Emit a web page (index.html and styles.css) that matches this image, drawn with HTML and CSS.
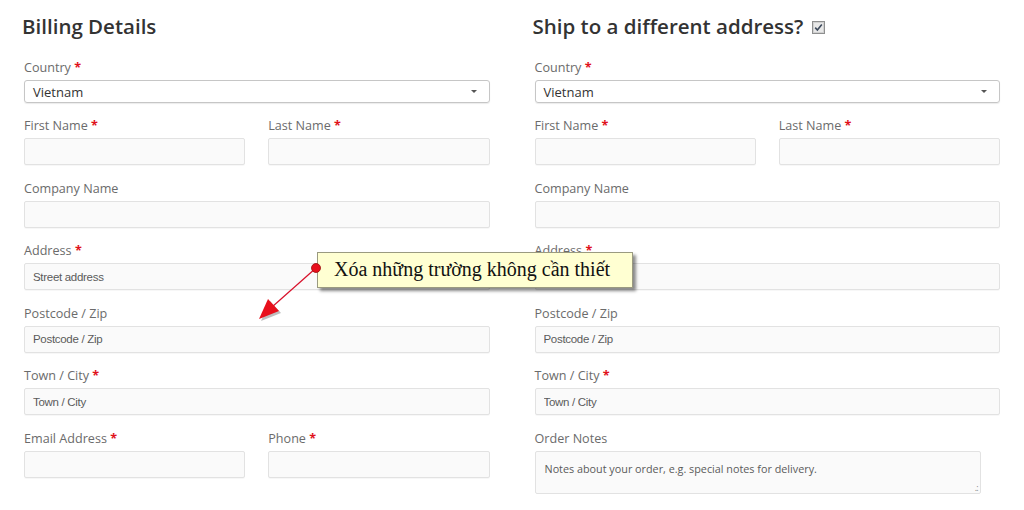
FILE: index.html
```html
<!DOCTYPE html>
<html lang="vi">
<head>
    <meta charset="UTF-8">
    <meta name="viewport" content="width=device-width, initial-scale=1.0">
    <title>Checkout</title>
    <link rel="stylesheet" href="styles.css">
</head>
<body>
    <div class="checkout">
        <div class="column">
            <h3 class="title">Billing Details</h3>

            <div class="field field-select">
                <label class="label">Country <abbr class="req">*</abbr></label>
                <div class="select"><span>Vietnam</span><i class="caret"></i></div>
            </div>

            <div class="pair">
                <div class="field">
                    <label class="label">First Name <abbr class="req">*</abbr></label>
                    <input type="text" class="input-field">
                </div>
                <div class="field">
                    <label class="label">Last Name <abbr class="req">*</abbr></label>
                    <input type="text" class="input-field">
                </div>
            </div>

            <div class="field">
                <label class="label">Company Name</label>
                <input type="text" class="input-field">
            </div>

            <div class="field">
                <label class="label">Address <abbr class="req">*</abbr></label>
                <input type="text" class="input-field" placeholder="Street address">
            </div>

            <div class="field">
                <label class="label">Postcode / Zip</label>
                <input type="text" class="input-field" placeholder="Postcode / Zip">
            </div>

            <div class="field">
                <label class="label">Town / City <abbr class="req">*</abbr></label>
                <input type="text" class="input-field" placeholder="Town / City">
            </div>

            <div class="pair">
                <div class="field">
                    <label class="label">Email Address <abbr class="req">*</abbr></label>
                    <input type="text" class="input-field">
                </div>
                <div class="field">
                    <label class="label">Phone <abbr class="req">*</abbr></label>
                    <input type="text" class="input-field">
                </div>
            </div>
        </div>

        <div class="column">
            <h3 class="title">Ship to a different address?
                <svg class="checkbox" width="13" height="13" viewBox="0 0 13 13">
                    <rect x="0.5" y="0.5" width="12" height="12" fill="#f4f4f4" stroke="#8e8f8f"/>
                    <rect x="1.5" y="1.5" width="10" height="10" fill="#e8e8e8" stroke="#d0d0d0"/>
                    <path d="M3.2 6.6 L5.4 9 L9.8 3.6" fill="none" stroke="#3d4a5c" stroke-width="1.6"/>
                </svg>
            </h3>

            <div class="field field-select">
                <label class="label">Country <abbr class="req">*</abbr></label>
                <div class="select"><span>Vietnam</span><i class="caret"></i></div>
            </div>

            <div class="pair">
                <div class="field">
                    <label class="label">First Name <abbr class="req">*</abbr></label>
                    <input type="text" class="input-field">
                </div>
                <div class="field">
                    <label class="label">Last Name <abbr class="req">*</abbr></label>
                    <input type="text" class="input-field">
                </div>
            </div>

            <div class="field">
                <label class="label">Company Name</label>
                <input type="text" class="input-field">
            </div>

            <div class="field">
                <label class="label">Address <abbr class="req">*</abbr></label>
                <input type="text" class="input-field">
            </div>

            <div class="field">
                <label class="label">Postcode / Zip</label>
                <input type="text" class="input-field" placeholder="Postcode / Zip">
            </div>

            <div class="field">
                <label class="label">Town / City <abbr class="req">*</abbr></label>
                <input type="text" class="input-field" placeholder="Town / City">
            </div>

            <div class="field">
                <label class="label">Order Notes</label>
                <div class="notes-wrap">
                    <textarea class="notes" placeholder="Notes about your order, e.g. special notes for delivery."></textarea>
                    <span class="grip">.:</span>
                </div>
            </div>
        </div>
    </div>

    <!-- annotation drawn over the form -->
    <svg class="pointer" width="80" height="70" viewBox="250 258 80 70">
        <line x1="316" y1="268" x2="272" y2="307" stroke="#d8102a" stroke-width="1.2"/>
        <polygon points="261,321 270,301 281,313" fill="#6e6e6e" opacity="0.45"/>
        <polygon points="259,319 268,299 279,311" fill="#e8101c"/>
        <circle cx="316" cy="268" r="4.5" fill="#e8101c" stroke="#9a0c0c" stroke-width="0.8"/>
    </svg>
    <div class="callout">Xóa những trường không cần thiết</div>
</body>
</html>
```

FILE: styles.css
```css
body {
    margin: 0;
    background-color: #fff;
    font-family: "Open Sans", Arial, sans-serif;
    color: #333;
}

.checkout {
    display: grid;
    grid-template-columns: 1fr 1fr;
    column-gap: 45px;
    padding: 14px 24px 0;
}

.title {
    margin: 0 0 20px -2px;
    font-size: 20.5px;
    line-height: 25px;
    font-weight: 600;
    color: #333;
    display: flex;
    align-items: center;
    gap: 9px;
}

.checkbox {
    margin-top: 1px;
}

.field {
    display: flex;
    flex-direction: column;
    margin-bottom: 14.5px;
}

.field-select {
    margin-bottom: 14px;
}

.label {
    font-size: 12.6px;
    line-height: 18px;
    color: #6b6b6b;
    margin-bottom: 3px;
}

.req {
    color: #e0121b;
    font-weight: 700;
    text-decoration: none;
    border: none;
}

.select {
    height: 23px;
    box-sizing: border-box;
    border: 1px solid #c6c6c6;
    border-radius: 3px;
    box-shadow: 0 1px 1px rgba(0, 0, 0, 0.08);
    padding: 0 8px;
    display: flex;
    align-items: center;
    justify-content: space-between;
    font-size: 13px;
    color: #333;
}

.caret {
    width: 0;
    height: 0;
    border-left: 3px solid transparent;
    border-right: 3px solid transparent;
    border-top: 3px solid #555;
    margin-right: 4px;
}

.pair {
    display: grid;
    grid-template-columns: 1fr 1fr;
    column-gap: 23px;
}

.input-field {
    height: 27px;
    box-sizing: border-box;
    margin: 0;
    padding: 0 8px;
    background-color: #fafafa;
    border: 1px solid #e2e2e2;
    border-radius: 2px;
    box-shadow: 0 1px 0 rgba(0, 0, 0, 0.03);
    font-family: "Liberation Sans", Arial, sans-serif;
    font-size: 11.5px;
    letter-spacing: -0.3px;
    color: #555;
    outline: none;
}

.input-field::placeholder,
.notes::placeholder {
    color: #5a5a5a;
    opacity: 1;
}

.notes-wrap {
    position: relative;
    width: 446px;
}

.notes {
    display: block;
    width: 446px;
    height: 43px;
    box-sizing: border-box;
    margin: 0;
    padding: 10px 9px;
    background-color: #fafafa;
    border: 1px solid #e2e2e2;
    border-radius: 2px;
    font-family: "Open Sans", Arial, sans-serif;
    font-size: 10.8px;
    line-height: 14px;
    color: #555;
    resize: none;
    outline: none;
}

.grip {
    position: absolute;
    right: 3px;
    bottom: 2px;
    font-size: 9px;
    line-height: 9px;
    color: #888;
    letter-spacing: -1px;
}

.callout {
    position: absolute;
    left: 317px;
    top: 252px;
    width: 316px;
    height: 36px;
    box-sizing: border-box;
    padding-left: 16px;
    background-color: #ffffd2;
    border: 1px solid #9a9a80;
    box-shadow: 3px 3px 3px rgba(0, 0, 0, 0.45);
    font-family: "Liberation Serif", "Times New Roman", serif;
    font-size: 20px;
    line-height: 33px;
    color: #111;
}

.pointer {
    position: absolute;
    left: 250px;
    top: 258px;
    z-index: 2;
}
```
